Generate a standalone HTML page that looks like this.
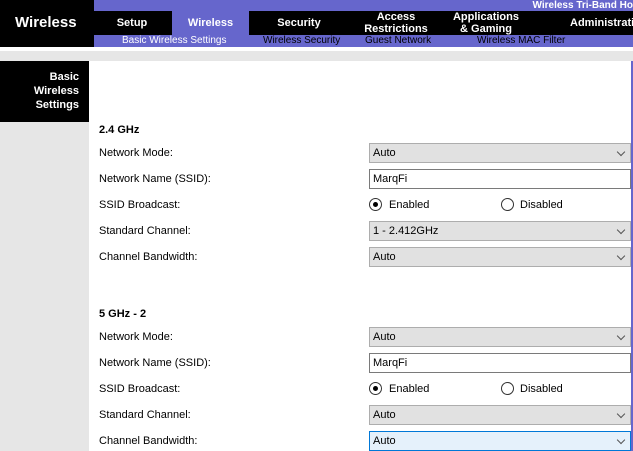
<!DOCTYPE html><html><head><style>
body{margin:0;width:633px;height:451px;overflow:hidden;background:#fff;font-family:"Liberation Sans",Arial,sans-serif;position:relative}
.a{position:absolute}
.nav{color:#fff;font-weight:bold;font-size:11px;text-align:center;line-height:12px}
.sub{font-size:10px;color:#000}
.lbl{left:99px;font-size:11px;color:#000}
.sel{left:369px;width:262px;height:20px;border:1px solid #adadad;background:#e1e1e1;font-size:11px;line-height:18px;padding-left:3px;box-sizing:border-box}
.sel::after{content:"";position:absolute;right:6px;top:5px;width:5px;height:5px;border-right:1px solid #555;border-bottom:1px solid #555;transform:rotate(45deg)}
.inp{left:369px;width:262px;height:20px;border:1px solid #7a7a7a;background:#fff;font-size:11px;line-height:18px;padding-left:3px;box-sizing:border-box}
.rad{width:11px;height:11px;border:1px solid #333;border-radius:50%}
.rad.on::after{content:"";position:absolute;left:3px;top:3px;width:5px;height:5px;border-radius:50%;background:#000}
.h{left:99px;font-size:11px;font-weight:bold}
</style></head><body>
<div class="a" style="left:0;top:0;width:94px;height:47px;background:#000"></div>
<div class="a" style="left:15px;top:14px;color:#fff;font-weight:bold;font-size:15px">Wireless</div>
<div class="a" style="left:94px;top:0;width:539px;height:11px;background:#6666cc"></div>
<div class="a" style="right:0;top:-1px;color:#fff;font-weight:bold;font-size:10px;line-height:13px;white-space:nowrap">Wireless Tri-Band Ho</div>
<div class="a" style="left:94px;top:11px;width:539px;height:24px;background:#000"></div>
<div class="a" style="left:172px;top:11px;width:77px;height:24px;background:#6666cc"></div>
<div class="a" style="left:94px;top:35px;width:539px;height:12px;background:#6666cc"></div>
<div class="a nav" style="left:112px;top:17px;width:40px">Setup</div>
<div class="a nav" style="left:172px;top:17px;width:77px">Wireless</div>
<div class="a nav" style="left:268px;top:17px;width:62px">Security</div>
<div class="a nav" style="left:360px;top:11px;width:72px">Access<br>Restrictions</div>
<div class="a nav" style="left:446px;top:11px;width:80px">Applications<br>&amp; Gaming</div>
<div class="a nav" style="left:570px;top:17px;white-space:nowrap">Administrati</div>
<div class="a sub" style="left:122px;top:35px;color:#fff">Basic Wireless Settings</div>
<div class="a sub" style="left:263px;top:35px">Wireless Security</div>
<div class="a sub" style="left:365px;top:35px">Guest Network</div>
<div class="a sub" style="left:477px;top:35px">Wireless MAC Filter</div>
<div class="a" style="left:0;top:51px;width:633px;height:10px;background:#e6e6e6"></div>
<div class="a" style="left:0;top:61px;width:89px;height:61px;background:#000"></div>
<div class="a" style="left:0;top:122px;width:89px;height:329px;background:#e6e6e6"></div>
<div class="a" style="left:0;top:70px;width:79px;text-align:right;color:#fff;font-weight:bold;font-size:11px;line-height:14px">Basic<br>Wireless<br>Settings</div>
<div class="a" style="left:631px;top:61px;width:2px;height:390px;background:#6666cc"></div>

<div class="a h" style="top:124px">2.4 GHz</div>
<div class="a lbl" style="top:147px">Network Mode:</div>
<div class="a lbl" style="top:173px">Network Name (SSID):</div>
<div class="a lbl" style="top:199px">SSID Broadcast:</div>
<div class="a lbl" style="top:225px">Standard Channel:</div>
<div class="a lbl" style="top:251px">Channel Bandwidth:</div>
<div class="a sel" style="top:143px">Auto</div>
<div class="a inp" style="top:169px">MarqFi</div>
<div class="a rad on" style="left:369px;top:198px"></div><div class="a" style="left:389px;top:199px;font-size:11px">Enabled</div>
<div class="a rad" style="left:501px;top:198px"></div><div class="a" style="left:520px;top:199px;font-size:11px">Disabled</div>
<div class="a sel" style="top:221px">1 - 2.412GHz</div>
<div class="a sel" style="top:247px">Auto</div>

<div class="a h" style="top:308px">5 GHz - 2</div>
<div class="a lbl" style="top:331px">Network Mode:</div>
<div class="a lbl" style="top:357px">Network Name (SSID):</div>
<div class="a lbl" style="top:383px">SSID Broadcast:</div>
<div class="a lbl" style="top:409px">Standard Channel:</div>
<div class="a lbl" style="top:435px">Channel Bandwidth:</div>
<div class="a sel" style="top:327px">Auto</div>
<div class="a inp" style="top:353px">MarqFi</div>
<div class="a rad on" style="left:369px;top:382px"></div><div class="a" style="left:389px;top:383px;font-size:11px">Enabled</div>
<div class="a rad" style="left:501px;top:382px"></div><div class="a" style="left:520px;top:383px;font-size:11px">Disabled</div>
<div class="a sel" style="top:405px">Auto</div>
<div class="a sel" style="top:431px;background:#e5f1fb;border-color:#0078d7">Auto</div>
</body></html>
